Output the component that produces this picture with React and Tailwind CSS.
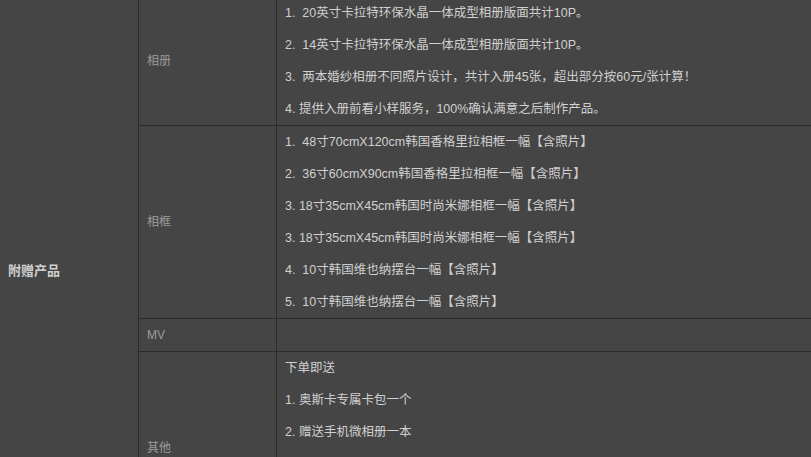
const ALBUM = [
  '1.\u00a0\u00a020英寸卡拉特环保水晶一体成型相册版面共计10P。',
  '2.\u00a0\u00a014英寸卡拉特环保水晶一体成型相册版面共计10P。',
  '3.\u00a0\u00a0两本婚纱相册不同照片设计，共计入册45张，超出部分按60元/张计算！',
  '4. 提供入册前看小样服务，100%确认满意之后制作产品。',
]

const FRAMES = [
  '1.\u00a0\u00a048寸70cmX120cm韩国香格里拉相框一幅【含照片】',
  '2.\u00a0\u00a036寸60cmX90cm韩国香格里拉相框一幅【含照片】',
  '3. 18寸35cmX45cm韩国时尚米娜相框一幅【含照片】',
  '3. 18寸35cmX45cm韩国时尚米娜相框一幅【含照片】',
  '4.\u00a0\u00a010寸韩国维也纳摆台一幅【含照片】',
  '5.\u00a0\u00a010寸韩国维也纳摆台一幅【含照片】',
]

// rest of this cell is below the fold
const OTHER = ['下单即送', '1. 奥斯卡专属卡包一个', '2. 赠送手机微相册一本', '', '', '']

function Row({ label, lines, last }) {
  return (
    <div className={`flex ${last ? '' : 'border-b border-[#2c2c2c]'}`}>
      <div className="w-[138px] shrink-0 border-r border-[#2c2c2c] flex items-center px-2 text-[12px] text-[#9c9c9c]">
        {label}
      </div>
      <div className="flex-1 px-2">
        {lines.length === 0 && <div className="h-[32px]" />}
        {lines.map((t, i) => (
          <p key={i} className="py-[6px] leading-[20px] h-[32px] text-[#d0d0d0] whitespace-nowrap">{t}</p>
        ))}
      </div>
    </div>
  )
}

export default function App() {
  return (
    <div
      className="w-[811px] h-[457px] overflow-hidden bg-[#454545] text-[12.5px]"
      style={{ fontFamily: '"Liberation Sans", "Noto Sans CJK SC", sans-serif' }}
    >
      <div className="flex mt-[-3px]">
        {/* Category label */}
        <div className="w-[139px] shrink-0 border-r border-[#2c2c2c] flex items-center px-2 font-bold text-[13px] text-[#d0d0d0]">
          附赠产品
        </div>
        <div className="flex-1 flex flex-col">
          <Row label="相册" lines={ALBUM} />
          <Row label="相框" lines={FRAMES} />
          <Row label="MV" lines={[]} />
          <Row label="其他" lines={OTHER} last />
        </div>
      </div>
    </div>
  )
}
